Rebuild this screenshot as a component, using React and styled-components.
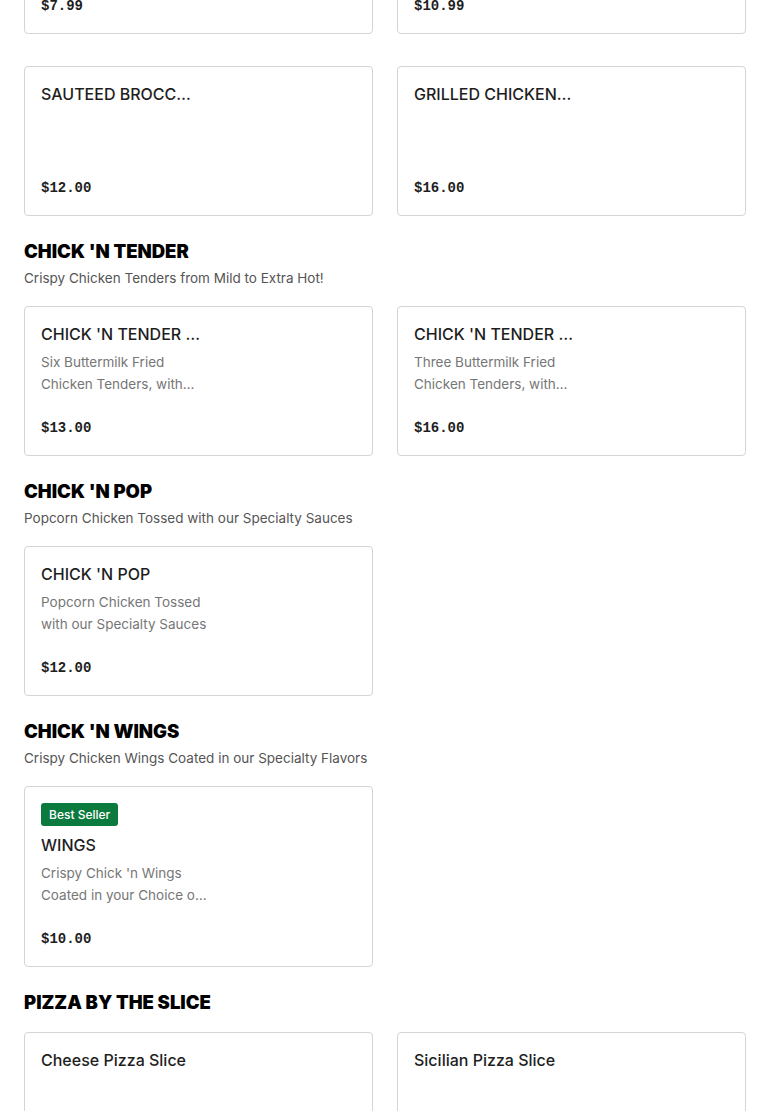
import React from 'react'
import styled, { createGlobalStyle } from 'styled-components'

const GlobalStyle = createGlobalStyle`
  html, body {
    margin: 0;
    padding: 0;
    background: #ffffff;
    font-family: Inter, "Noto Sans", sans-serif;
    overflow: hidden;
  }
`

const Page = styled.div`
  margin-top: -116px;
  padding: 0 24px;
  display: flex;
  flex-direction: column;
  gap: 23px;
`

const Section = styled.section`
  display: flex;
  flex-direction: column;
`

const Heading = styled.h2`
  margin: 0;
  font-size: 18.5px;
  line-height: 24px;
  font-weight: 900;
  color: #000;
`

const Subtitle = styled.p`
  margin: 5px 0 0;
  font-size: 13.5px;
  line-height: 20px;
  color: #555;
`

const Grid = styled.div`
  display: grid;
  grid-template-columns: 349px 349px;
  column-gap: 24px;
  row-gap: 32px;
  margin-top: ${p => (p.$flush ? '0' : '18px')};
`

const Card = styled.div`
  box-sizing: border-box;
  min-height: 150px;
  border: 1px solid #d4d4d4;
  border-radius: 4px;
  padding: 16px 16px 17px;
  display: flex;
  flex-direction: column;
`

const Info = styled.div`
  width: 168px;
  display: flex;
  flex-direction: column;
  align-items: flex-start;
  flex: 1;
`

const Badge = styled.span`
  background: #0b7a3e;
  color: #fff;
  font-size: 12px;
  line-height: 23px;
  font-weight: 500;
  padding: 0 8px;
  border-radius: 3px;
  margin-bottom: 8px;
`

const Title = styled.div`
  max-width: 160px;
  font-size: 16px;
  line-height: 22px;
  font-weight: 500;
  color: #1e1e1e;
  white-space: nowrap;
  overflow: hidden;
  text-overflow: ellipsis;
`

const Desc = styled.div`
  margin-top: 6px;
  font-size: 13.5px;
  line-height: 22px;
  color: #767676;
  display: -webkit-box;
  -webkit-line-clamp: 2;
  -webkit-box-orient: vertical;
  overflow: hidden;
`

const Price = styled.div`
  margin-top: auto;
  padding-top: 23px;
  font-family: "Liberation Mono", "DejaVu Sans Mono", monospace;
  font-size: 14px;
  line-height: 20px;
  font-weight: 700;
  color: #1e1e1e;
`

const sections = [
  {
    items: [
      { title: 'FRENCH FRIES', price: '$7.99' },
      { title: 'MOZZARELLA STICKS', price: '$10.99' },
      { title: 'SAUTEED BROCCOLI', price: '$12.00' },
      { title: 'GRILLED CHICKEN SALAD', price: '$16.00' },
    ],
  },
  {
    name: "CHICK 'N TENDER",
    sub: 'Crispy Chicken Tenders from Mild to Extra Hot!',
    items: [
      {
        title: "CHICK 'N TENDER 6 PIECE",
        desc: 'Six Buttermilk Fried Chicken Tenders, with one dipping sauce',
        price: '$13.00',
      },
      {
        title: "CHICK 'N TENDER COMBO",
        desc: 'Three Buttermilk Fried Chicken Tenders, with one side and a drink',
        price: '$16.00',
      },
    ],
  },
  {
    name: "CHICK 'N POP",
    sub: 'Popcorn Chicken Tossed with our Specialty Sauces',
    items: [
      {
        title: "CHICK 'N POP",
        desc: 'Popcorn Chicken Tossed with our Specialty Sauces',
        price: '$12.00',
      },
    ],
  },
  {
    name: "CHICK 'N WINGS",
    sub: 'Crispy Chicken Wings Coated in our Specialty Flavors',
    items: [
      {
        badge: 'Best Seller',
        title: 'WINGS',
        desc: "Crispy Chick 'n Wings Coated in your Choice of Specialty Sauce",
        price: '$10.00',
      },
    ],
  },
  {
    name: 'PIZZA BY THE SLICE',
    items: [
      { title: 'Cheese Pizza Slice', price: '$4.00' },
      { title: 'Sicilian Pizza Slice', price: '$4.50' },
    ],
  },
]

const MenuCard = ({ item }) => (
  <Card>
    <Info>
      {item.badge && <Badge>{item.badge}</Badge>}
      <Title>{item.title}</Title>
      {item.desc && <Desc>{item.desc}</Desc>}
      <Price>{item.price}</Price>
    </Info>
  </Card>
)

const App = () => (
  <>
    <GlobalStyle />
    <Page>
      {sections.map((s, i) => (
        <Section key={i}>
          {s.name && <Heading>{s.name}</Heading>}
          {s.sub && <Subtitle>{s.sub}</Subtitle>}
          <Grid $flush={!s.name}>
            {s.items.map((it, j) => (
              <MenuCard key={j} item={it} />
            ))}
          </Grid>
        </Section>
      ))}
    </Page>
  </>
)

export default App
